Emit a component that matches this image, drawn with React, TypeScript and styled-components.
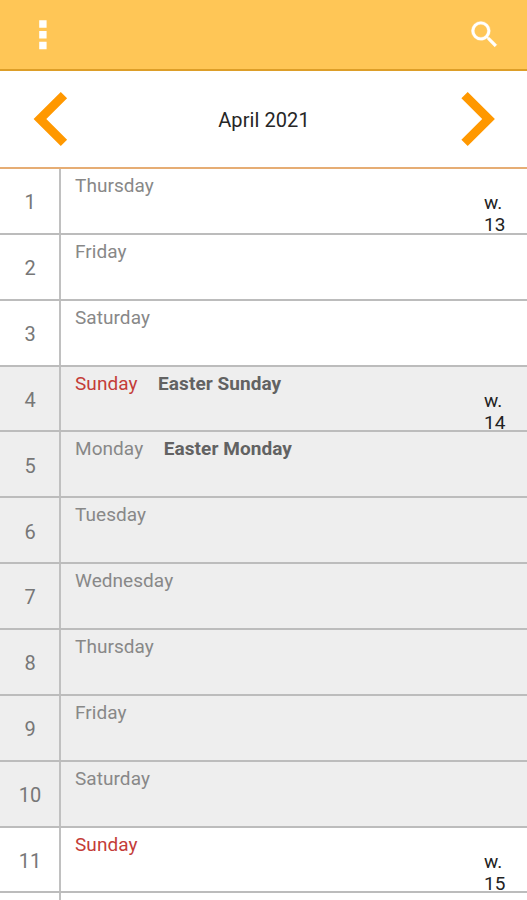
import React from "react";
import styled, { createGlobalStyle } from "styled-components";

const Global = createGlobalStyle`
  *{box-sizing:border-box}
  body{margin:0;background:#fff;overflow:hidden;font-family:Roboto,"Liberation Sans",sans-serif}
`;
const Screen = styled.main`width:527px;height:900px;overflow:hidden;background:#fff;`;
const Toolbar = styled.header`
  height:71px;background:#ffc656;border-bottom:2px solid #dd9e28;
  display:flex;justify-content:space-between;align-items:flex-start;padding:16.5px 24.8px 0 39px;
`;
const MonthBar = styled.nav`
  height:98px;border-bottom:2px solid #e6ad74;display:flex;justify-content:space-between;align-items:center;
  padding:0 32px 0 33px;
`;
const Month = styled.h1`margin:2px 0 0;font-size:20px;font-weight:400;letter-spacing:.08px;color:#262626;`;
const IconButton = styled.button`border:0;padding:0;background:none;display:block;line-height:0;`;
const Row = styled.div<{ $shaded: boolean }>`
  height:65.86px;display:grid;grid-template-columns:61px 1fr 43px;grid-template-rows:100%;
  background:${(p) => (p.$shaded ? "#eee" : "#fff")};border-bottom:2px solid #bcbcbc;
`;
const DateCell = styled.div`
  border-right:2px solid #c0c0c0;display:flex;align-items:center;justify-content:center;
  font-size:20px;color:#777;padding:2.6px 0 0 1px;
`;
const DayCell = styled.div`padding:5px 0 0 14px;font-size:19px;letter-spacing:.06px;line-height:24px;display:flex;gap:20.6px;`;
const DayName = styled.span<{ $sunday: boolean }>`color:${(p) => (p.$sunday ? "#c43c38" : "#888")};`;
const Holiday = styled.strong`color:#626262;font-weight:700;`;
const Week = styled.div`padding-top:23px;font-size:19px;line-height:22px;color:#222;width:24px;`;

const names = ["Thursday", "Friday", "Saturday", "Sunday", "Monday", "Tuesday", "Wednesday"];
const holidays: Record<number, string> = { 4: "Easter Sunday", 5: "Easter Monday" };
const weeks: Record<number, number> = { 1: 13, 4: 14, 11: 15 };

export default function App() {
  return (
    <Screen>
      <Global />
      <Toolbar>
        <IconButton aria-label="Menu">
          <svg width="8" height="34" fill="#fff"><path d="M.2 3.2h7.4v7.5H.2zM.2 14h7.4v7.5H.2zM.2 24.8h7.4v7.5H.2z" /></svg>
        </IconButton>
        <IconButton aria-label="Search">
          <svg width="35" height="35" viewBox="0 0 24 24" fill="#fff" stroke="#fff" strokeWidth=".2">
            <path d="M15.5 14h-.79l-.28-.27A6.47 6.47 0 0 0 16 9.5 6.5 6.5 0 1 0 9.5 16c1.61 0 3.09-.59 4.23-1.57l.27.28v.79l5 4.99L20.49 19zm-6 0a4.5 4.5 0 1 1 0-9 4.5 4.5 0 0 1 0 9z" />
          </svg>
        </IconButton>
      </Toolbar>
      <MonthBar>
        <IconButton aria-label="Previous month">
          <svg width="35" height="56" fill="#ff9800"><path d="M.6 28 27.8 1l6.3 6.3L13.3 28l20.8 20.7-6.3 6.3z" /></svg>
        </IconButton>
        <Month>April 2021</Month>
        <IconButton aria-label="Next month">
          <svg width="35" height="56" fill="#ff9800"><path d="M34.9 28 7.7 1 1.4 7.3 22.2 28 1.4 48.7 7.7 55z" /></svg>
        </IconButton>
      </MonthBar>
      {Array.from({ length: 12 }, (_, i) => i + 1).map((day) => (
        <Row key={day} $shaded={day >= 4 && day <= 10}>
          <DateCell>{day < 12 ? day : ""}</DateCell>
          <DayCell>
            <DayName $sunday={day % 7 === 4}>{day < 12 ? names[(day - 1) % 7] : ""}</DayName>
            {holidays[day] && <Holiday>{holidays[day]}</Holiday>}
          </DayCell>
          {weeks[day] && <Week>w. {weeks[day]}</Week>}
        </Row>
      ))}
    </Screen>
  );
}
